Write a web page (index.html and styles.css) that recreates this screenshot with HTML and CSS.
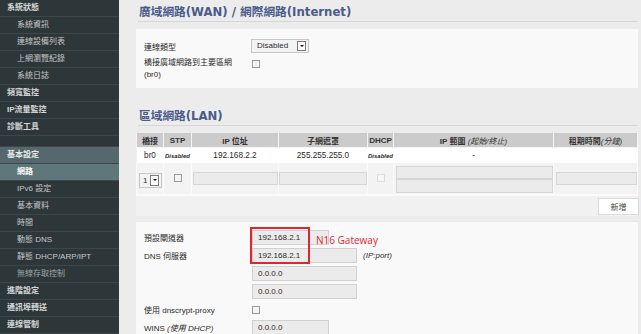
FILE: index.html
```html
<!DOCTYPE html>
<html>
<head>
<title>網路設定</title>
<meta charset="utf-8">
<link rel="stylesheet" href="styles.css">
</head>
<body>
  <aside class="nav">
    <a class="top">系統狀態</a>
    <a class="sub">系統資訊</a>
    <a class="sub">連線設備列表</a>
    <a class="sub">上網瀏覽紀錄</a>
    <a class="sub">系統日誌</a>
    <a class="top">頻寬監控</a>
    <a class="top">IP流量監控</a>
    <a class="top">診斷工具</a>
    <div class="spacer"></div>
    <a class="top group">基本設定</a>
    <a class="sub current">網路</a>
    <a class="sub">IPv6 設定</a>
    <a class="sub">基本資料</a>
    <a class="sub">時間</a>
    <a class="sub">動態 DNS</a>
    <a class="sub">靜態 DHCP/ARP/IPT</a>
    <a class="sub dim">無線存取控制</a>
    <a class="top">進階設定</a>
    <a class="top">通訊埠轉送</a>
    <a class="top">連線管制</a>
  </aside>

  <main class="content">
    <h2 class="title">廣域網路(WAN) / 網際網路(Internet)</h2>
    <section class="panel wan">
      <div class="field">
        <span class="label">連線類型</span>
        <span class="select">Disabled<i class="arrow"></i></span>
      </div>
      <div class="field tall">
        <span class="label">橋接廣域網路到主要區網<br>(br0)</span>
        <span class="check"></span>
      </div>
    </section>

    <h2 class="title second">區域網路(LAN)</h2>
    <section class="panel lan">
      <table class="lan-table">
        <colgroup>
          <col style="width:27px"><col style="width:28px"><col style="width:87px"><col style="width:89px">
          <col style="width:26px"><col style="width:160px"><col style="width:84px">
        </colgroup>
        <thead>
          <tr>
            <th>橋接</th><th>STP</th><th>IP 位址</th><th>子網遮罩</th><th>DHCP</th>
            <th>IP 範圍 <em>(起始/終止)</em></th><th>租期時間<em>(分鐘)</em></th>
          </tr>
        </thead>
        <tbody>
          <tr class="data">
            <td>br0</td><td><span class="state">Disabled</span></td><td>192.168.2.2</td><td>255.255.255.0</td>
            <td><span class="state">Disabled</span></td><td>-</td><td></td>
          </tr>
          <tr class="edit">
            <td><span class="select small">1<i class="arrow"></i></span></td>
            <td><span class="check"></span></td>
            <td><span class="input fill"></span></td>
            <td><span class="input fill"></span></td>
            <td><span class="check off"></span></td>
            <td class="range"><span class="input fill"></span><span class="input fill"></span></td>
            <td><span class="input fill"></span></td>
          </tr>
        </tbody>
      </table>
      <div class="actions"><button class="btn">新增</button></div>
    </section>

    <section class="panel dns">
      <div class="field">
        <span class="label">預設閘道器</span>
        <span class="input short">192.168.2.1</span>
      </div>
      <div class="field">
        <span class="label">DNS 伺服器</span>
        <span class="input">192.168.2.1</span>
        <em class="hint">(IP:port)</em>
      </div>
      <div class="field">
        <span class="label"></span>
        <span class="input">0.0.0.0</span>
      </div>
      <div class="field">
        <span class="label"></span>
        <span class="input">0.0.0.0</span>
      </div>
      <div class="field">
        <span class="label">使用 dnscrypt-proxy</span>
        <span class="check"></span>
      </div>
      <div class="field">
        <span class="label">WINS <em>(使用 DHCP)</em></span>
        <span class="input short">0.0.0.0</span>
      </div>
      <div class="mark"></div>
      <span class="note">N16 Gateway</span>
    </section>
  </main>
</body>
</html>
```
FILE: styles.css
```css
html, body {
  margin: 0;
  padding: 0;
  height: 334px;
  overflow: hidden;
}
body {
  display: flex;
  background-color: #ececec;
  font-family: "Liberation Sans", "Noto Sans CJK TC", sans-serif;
  font-size: 8px;
  color: #2a2a2a;
}

/* sidebar */
.nav {
  flex: none;
  width: 119px;
  background-color: #2d373a;
}
.nav a {
  display: block;
  height: 16px;
  line-height: 16px;
  border-bottom: 1px solid #3b474a;
  padding-left: 7px;
  color: #d6d6d6;
  white-space: nowrap;
}
.nav .top {
  font-weight: bold;
}
.nav .sub {
  padding-left: 17px;
  color: #c6c6c6;
}
.nav .dim {
  color: #9fa4a6;
}
.nav .group {
  background-color: #55686d;
  color: #e8e8e8;
}
.nav .current {
  background-color: #5f767b;
  color: #fff;
  font-weight: bold;
}
.spacer {
  height: 10px;
  border-bottom: 1px solid #3b474a;
}

/* main */
.content {
  flex: 1;
  padding: 0 4px 0 17px;
}
.title {
  margin: 0 4px 7px 2px;
  padding: 4px 0 1px 1px;
  line-height: 16px;
  font-family: "DejaVu Sans", "Noto Sans CJK TC", sans-serif;
  font-size: 11.7px;
  font-weight: bold;
  color: #4a5a8a;
  border-bottom: 1px solid #d6d6d6;
}
.title.second {
  margin-top: 16px;
}
.panel {
  position: relative;
  margin-right: 4px;
  background-color: #f9f9f9;
}
.field {
  display: flex;
  align-items: center;
  height: 15px;
  margin-bottom: 3px;
}
.label {
  flex: none;
  width: 108px;
}
.wan {
  padding: 10px 8px 7px;
}
.wan .field {
  height: 14px;
  margin-bottom: 4px;
}
.wan .label {
  width: 107px;
}
.wan .field.tall {
  height: auto;
  align-items: flex-start;
  margin-bottom: 0;
  line-height: 12px;
}
.wan .field.tall .check {
  margin: 3px 0 0 1px;
}

.select {
  position: relative;
  box-sizing: border-box;
  display: inline-block;
  width: 58px;
  height: 14px;
  line-height: 12px;
  padding-left: 5px;
  background-color: #f3f3f3;
  border: 1px solid #c6c6c6;
}
.select .arrow {
  position: absolute;
  right: 2px;
  top: 1px;
  box-sizing: border-box;
  width: 9px;
  height: 10px;
  border: 1px solid #7c7c7c;
  background: #fafafa;
}
.select .arrow::after {
  content: "";
  position: absolute;
  left: 2px;
  top: 3px;
  border-left: 2px solid transparent;
  border-right: 2px solid transparent;
  border-top: 2px solid #111;
}
.select.small {
  width: 23px;
  height: 15px;
  line-height: 13px;
  padding-left: 3px;
  margin: 3px 0 0 2px;
}
.select.small .arrow {
  height: 11px;
}

.check {
  display: inline-block;
  box-sizing: border-box;
  width: 8px;
  height: 8px;
  border: 1px solid #9a9a9a;
  background-color: #f3f3f3;
}
.check.off {
  border-color: #dcdcdc;
  background-color: #f7f7f7;
}

.input {
  display: inline-block;
  box-sizing: border-box;
  width: 105px;
  height: 15px;
  line-height: 13px;
  padding-left: 5px;
  background-color: #ebebeb;
  border: 1px solid #d0d0d0;
}
.input.short {
  width: 77px;
}
.input.fill {
  display: block;
  width: 100%;
  height: 13px;
  border-color: #d6d6d6;
}

/* lan table */
.lan {
  background-color: #f1f1f1;
}
.lan-table {
  width: 501px;
  table-layout: fixed;
  border-collapse: collapse;
}
.lan-table th {
  height: 14px;
  padding: 0;
  background-color: #cbcbcb;
  border: 1px solid #f4f4f4;
  border-top: 0;
  color: #333;
  font-weight: bold;
}
.lan-table th em {
  font-weight: normal;
}
.lan-table td {
  padding: 0;
  text-align: center;
}
.lan-table .data td {
  height: 15px;
  background-color: #fff;
  font-size: 8.2px;
}
.state {
  font-size: 6px;
  font-style: italic;
  font-weight: bold;
}
.lan-table .edit td {
  height: 30px;
  background-color: #f3f3f3;
  border: 1px solid #fbfbfb;
  border-top: 0;
  vertical-align: middle;
}
.lan-table .edit td:first-child {
  text-align: left;
}
.lan-table .edit .range {
  padding: 1px 0 0 2px;
}
.lan-table .edit .range .input + .input {
  height: 14px;
}
.lan-table .edit td:nth-child(3) {
  padding-left: 1px;
}
.lan-table .edit td:last-child {
  padding-left: 2px;
}
.actions {
  display: flex;
  justify-content: flex-end;
  padding: 2px 0 1px;
  border-top: 1px solid #fafafa;
}
.btn {
  width: 41px;
  height: 17px;
  margin: 0 -1px 0 0;
  padding: 0;
  background-color: #fff;
  border: 1px solid #dadada;
  font: 8px "Liberation Sans", "Noto Sans CJK TC", sans-serif;
  color: #444;
}

/* dns */
.dns {
  margin-top: 5px;
  padding: 8px 8px 0;
  height: 108px;
  overflow: hidden;
  border-top: 1px solid #e8e8e8;
}
.hint {
  margin-left: 6px;
}
.mark {
  position: absolute;
  left: 114px;
  top: 5px;
  width: 56px;
  height: 33px;
  border: 2px solid #e0262c;
}
.note {
  position: absolute;
  left: 180px;
  top: 11px;
  font-family: "Open Sans", "Liberation Sans", sans-serif;
  font-size: 10px;
  color: #e2262d;
}
```
